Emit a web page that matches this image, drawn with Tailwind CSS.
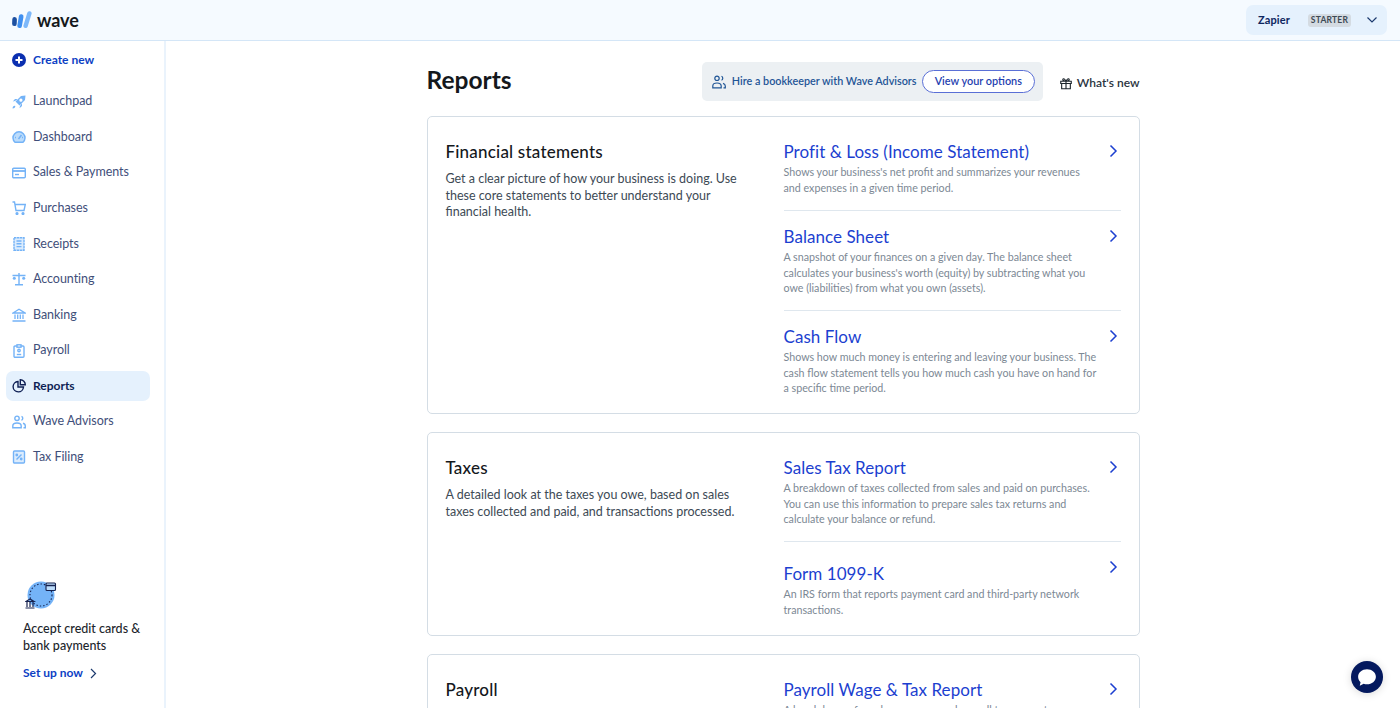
<!DOCTYPE html>
<html lang="en">

<head>
  <meta charset="UTF-8">
  <title>Reports</title>
  <script src="https://cdn.jsdelivr.net/npm/@tailwindcss/browser@4"></script>
</head>

<body class="h-screen overflow-hidden bg-white font-['Lato',sans-serif] text-[#1c252c] flex flex-col">
  <header class="h-[41px] shrink-0 bg-[#f5faff] border-b border-[#d4e6f7] flex items-center justify-between pl-[12px] pr-[13px]">
    <div class="flex items-center gap-[5px]">
      <svg width="20" height="18" viewBox="0 0 20 18" fill="none" stroke-linecap="round">
        <path d="M2.600 8.300 2.400 12.800" stroke="#1c4fa0" stroke-width="4.600" />
        <path d="M9.200 5.500 7.600 14.800" stroke="#3f8ff0" stroke-width="4.600" />
        <path d="M17.400 2.400 13.600 14.800" stroke="#7db8fa" stroke-width="4.400" />
      </svg>
      <span class="text-[18px] leading-none font-bold text-[#14181c] tracking-[-0.1px]">wave</span>
    </div>
    <div class="w-[141px] h-[30px] bg-[#e5f1fd] rounded-[7px] flex items-center pl-[12px] pr-[9px]">
      <span class="text-[11px] font-bold text-[#0e2660] tracking-[0.1px]">Zapier</span>
      <span class="ml-[18px] h-[13px] px-[3px] bg-[#d4dbe2] rounded-[3px] text-[8.500px] leading-[13px] font-bold text-[#3d4a55] tracking-[0.2px]">STARTER</span>
      <svg class="ml-auto" width="12" height="8" viewBox="0 0 12 8" fill="none" stroke="#1c3a6e" stroke-width="1.200"><path d="M1.500 1.500 6 6l4.500-4.500" /></svg>
    </div>
  </header>

  <div class="flex-1 flex min-h-0">
    <aside class="w-[166px] shrink-0 border-r-2 border-[#eaf3fc] flex flex-col pl-[6px] pr-[14px]">
      <a class="h-[30px] mt-[4px] flex items-center gap-[7px] pl-[6px] text-[12px] font-bold text-[#0d3fc4]">
        <svg width="14" height="14" viewBox="0 0 14 14"><circle cx="7" cy="7" r="7" fill="#0b2fb0" /><path d="M7 3.500v7M3.500 7h7" stroke="#fff" stroke-width="2" /></svg>
        Create new
      </a>
      <nav class="mt-[11.500px] flex flex-col gap-[5.600px] text-[12.500px] text-[#3f4f7a] tracking-[-0.05px]">
        <a class="h-[30px] flex items-center gap-[7px] pl-[6px]">
          <svg width="14" height="14" viewBox="0 0 14 14" fill="#74b3f7"><path d="M13.500.5 13 5 7.500 10.500 3.500 6.500 9 1zM8.800 3.600a1.600 1.600 0 1 0 1.700 1.700 1.600 1.600 0 0 0-1.700-1.700z" fill-rule="evenodd" /><path d="M3 6 .8 6.500 3 4h2.800zM8 11l-.5 2.200L10 11V8.200zM.6 13.400c0-1.800.7-2.600 2.300-2.600l.4.300c0 1.600-.8 2.300-2.700 2.300z" /></svg>
          Launchpad
        </a>
        <a class="h-[30px] flex items-center gap-[7px] pl-[6px]">
          <svg width="14" height="14" viewBox="0 0 14 14" fill="#bcdcfb" stroke="#74b3f7" stroke-width="1.500"><path d="M3 12.300a6 6 0 1 1 8 0z" /><path d="M6.500 9 9.500 5M3 7.500h1M10 7.500h1" fill="none" /></svg>
          Dashboard
        </a>
        <a class="h-[30px] flex items-center gap-[7px] pl-[6px]">
          <svg width="14" height="14" viewBox="0 0 14 14" fill="none" stroke="#74b3f7" stroke-width="1.400"><rect x=".7" y="2.200" width="12.600" height="9.600" rx="1" /><path d="M.7 5h12.600" stroke-width="1.800" /><path d="M3 8.500h4" /></svg>
          Sales &amp; Payments
        </a>
        <a class="h-[30px] flex items-center gap-[7px] pl-[6px]">
          <svg width="14" height="14" viewBox="0 0 14 14" fill="none" stroke="#74b3f7" stroke-width="1.400"><path d="M.5 1h2l1.500 8.500h8L13.300 3.500H3" /><circle cx="5" cy="12.500" r=".9" fill="#74b3f7" /><circle cx="11" cy="12.500" r=".9" fill="#74b3f7" /></svg>
          Purchases
        </a>
        <a class="h-[30px] flex items-center gap-[7px] pl-[6px]">
          <svg width="14" height="14" viewBox="0 0 14 14" fill="#dcecfd" stroke="#74b3f7" stroke-width="1.400"><path d="M2 .8h10v12.400H2z" stroke-dasharray="2.500 .5" /><path d="M4.500 4h5M4.500 6.800h5M4.500 9.600h5" fill="none" /></svg>
          Receipts
        </a>
        <a class="h-[30px] flex items-center gap-[7px] pl-[6px]">
          <svg width="14" height="14" viewBox="0 0 14 14" fill="none" stroke="#74b3f7" stroke-width="1.400"><path d="M7 1v11.500M3 12.800h8M.5 3.500h13" /><circle cx="2.300" cy="6.300" r="1.500" fill="#74b3f7" stroke="none" /><circle cx="11.700" cy="6.300" r="1.500" fill="#74b3f7" stroke="none" /></svg>
          Accounting
        </a>
        <a class="h-[30px] flex items-center gap-[7px] pl-[6px]">
          <svg width="14" height="14" viewBox="0 0 14 14" fill="none" stroke="#74b3f7" stroke-width="1.300"><path d="M1 5 7 1.200 13 5zM3 6.500v4.500M5.700 6.500v4.500M8.300 6.500v4.500M11 6.500v4.500M.5 13h13" /></svg>
          Banking
        </a>
        <a class="h-[30px] flex items-center gap-[7px] pl-[6px]">
          <svg width="14" height="14" viewBox="0 0 14 14" fill="none" stroke="#74b3f7" stroke-width="1.400"><rect x="2" y="2" width="10" height="11.300" rx="1" /><rect x="5" y=".8" width="4" height="2.400" fill="#fff" /><circle cx="7" cy="6.500" r="1.200" /><path d="M4.800 10.500h4.400" /></svg>
          Payroll
        </a>
        <a class="h-[30px] flex items-center gap-[7px] pl-[6px] bg-[#e5f1fd] rounded-[7px] text-[12px] font-bold text-[#0e1f54] tracking-[0px]">
          <svg width="14" height="14" viewBox="0 0 14 14" fill="none" stroke="#0e1f54" stroke-width="1.400"><path d="M6 2.500a5.200 5.200 0 1 0 5.500 5.500H6z" /><path d="M8.300.8a5 5 0 0 1 5 5H8.300z" /></svg>
          Reports
        </a>
        <a class="h-[30px] flex items-center gap-[7px] pl-[6px]">
          <svg width="14" height="14" viewBox="0 0 14 14" fill="none" stroke="#74b3f7" stroke-width="1.400"><circle cx="5" cy="3.300" r="2.200" /><path d="M.8 12.800V11c0-2 1.500-3 4.200-3s4.200 1 4.200 3v1.800zM9.500 1.300a2.200 2.200 0 0 1 0 4M11 8.300c1.500.4 2.300 1.300 2.300 2.700v1.800h-1.800" /></svg>
          Wave Advisors
        </a>
        <a class="h-[30px] flex items-center gap-[7px] pl-[6px]">
          <svg width="14" height="14" viewBox="0 0 14 14" fill="#dcecfd" stroke="#74b3f7" stroke-width="1.400"><rect x="1.500" y="1" width="11" height="12" rx="1" /><path d="M9.500 4.500l-5 5" /><circle cx="4.800" cy="5" r=".7" fill="#74b3f7" /><circle cx="9.200" cy="9" r=".7" fill="#74b3f7" /></svg>
          Tax Filing
        </a>
      </nav>
      <div class="mt-auto pl-[17px] pb-[27px]">
        <svg width="34" height="30" viewBox="0 0 34 30" class="ml-[2px]">
          <circle cx="16" cy="15" r="13.500" fill="#74b3f7" />
          <circle cx="16" cy="15" r="11" fill="none" stroke="#16224f" stroke-width="1.100" stroke-dasharray="1.400 2" />
          <rect x="21" y="3" width="9.500" height="7.500" rx="1" fill="#bcdcfb" stroke="#16224f" stroke-width="1.100" />
          <path d="M21 5.500h9.500" stroke="#16224f" stroke-width="1.500" />
          <path d="M1 21.500 5 19l4 2.500zM2 22v5M5 22v5M8 22v5M.500 28h9" fill="none" stroke="#16224f" stroke-width="1.200" />
        </svg>
        <p class="mt-[11px] text-[12.500px] leading-[16.500px] font-medium text-[#1c252c]">Accept credit cards &amp; bank payments</p>
        <a class="mt-[11px] flex items-center gap-[7px] text-[12px] leading-[16px] font-bold text-[#0d3fc4]">
          Set up now
          <svg width="7" height="11" viewBox="0 0 7 11" fill="none" stroke="#1c3a6e" stroke-width="1.200"><path d="m1 1 4.500 4.500L1 10" /></svg>
        </a>
      </div>
    </aside>

    <main class="flex-1 min-w-0 relative overflow-hidden">
      <div class="w-[713px] mx-auto">
        <div class="h-[75px] flex items-start">
          <h1 class="mt-[23px] text-[24.500px] leading-[32px] font-bold text-[#14181c]">Reports</h1>
          <div class="ml-auto mt-[21px] w-[341px] h-[39px] bg-[#ecf0f3] rounded-[5px] flex items-center pl-[10px] pr-[8px]">
            <svg width="14" height="14" viewBox="0 0 14 14" fill="none" stroke="#1f5596" stroke-width="1.200"><circle cx="5" cy="3.300" r="2.200" /><path d="M.8 12.800V11c0-2 1.500-3 4.200-3s4.200 1 4.200 3v1.800zM9.500 1.300a2.200 2.200 0 0 1 0 4M11 8.300c1.500.4 2.300 1.300 2.300 2.700v1.800h-1.800" /></svg>
            <span class="ml-[6px] text-[10.800px] font-semibold text-[#1f5596] whitespace-nowrap">Hire a bookkeeper with Wave Advisors</span>
            <span class="ml-auto w-[113px] h-[23px] bg-white border border-[#5a6fd6] rounded-full flex items-center justify-center text-[10.900px] font-semibold text-[#1f3fb0]">View your options</span>
          </div>
          <div class="ml-[17px] mt-[34px] flex items-center gap-[5px] text-[12px] leading-[16px] font-semibold text-[#2a3440] whitespace-nowrap">
            <svg width="12" height="13" viewBox="0 0 13 13" fill="none" stroke="#1c252c" stroke-width="1.200"><path d="M.8 4h11.400v2.500H.8zM1.800 6.500h9.400v5.700H1.800zM6.500 4v8.200M6.500 4C5 1 3 .8 3 2.300 3 3.500 4.500 4 6.500 4zM6.500 4C8 1 10 .8 10 2.300 10 3.500 8.500 4 6.500 4z" /></svg>
            What's new
          </div>
        </div>

        <section class="h-[298px] border border-[#d4dde5] rounded-[5px] flex pl-[18px] pr-[18px]">
          <div class="w-[338px] shrink-0">
            <h2 class="mt-[25px] text-[17px] leading-[20px] font-medium text-[#14181c] tracking-[0.2px]">Financial statements</h2>
            <p class="mt-[9px] w-[300px] text-[12.500px] leading-[16.500px] text-[#3d4a55]">Get a clear picture of how your business is doing. Use these core statements to better understand your financial health.</p>
          </div>
          <div class="flex-1 min-w-0">
            <a class="h-[94px] border-b border-[#dfe7ee] flex justify-between pt-[24px]">
              <div>
                <h3 class="text-[17px] leading-[22px] text-[#1c3fd0] tracking-[0.05px]">Profit &amp; Loss (Income Statement)</h3>
                <p class="mt-[1px] w-[310px] text-[10.700px] leading-[15.500px] text-[#7c8894]">Shows your business's net profit and summarizes your revenues and expenses in a given time period.</p>
              </div>
              <svg class="mt-[3px] mr-[3px] shrink-0" width="9" height="14" viewBox="0 0 9 14" fill="none" stroke="#1c3fd0" stroke-width="1.500"><path d="m1.500 1.500 5.500 5.500-5.500 5.500" /></svg>
            </a>
            <a class="h-[100px] border-b border-[#dfe7ee] flex justify-between pt-[15px]">
              <div>
                <h3 class="text-[17px] leading-[22px] text-[#1c3fd0] tracking-[0.05px]">Balance Sheet</h3>
                <p class="mt-[1px] w-[315px] text-[10.700px] leading-[15.500px] text-[#7c8894]">A snapshot of your finances on a given day. The balance sheet calculates your business's worth (equity) by subtracting what you owe (liabilities) from what you own (assets).</p>
              </div>
              <svg class="mt-[3px] mr-[3px] shrink-0" width="9" height="14" viewBox="0 0 9 14" fill="none" stroke="#1c3fd0" stroke-width="1.500"><path d="m1.500 1.500 5.500 5.500-5.500 5.500" /></svg>
            </a>
            <a class="flex justify-between pt-[15px]">
              <div>
                <h3 class="text-[17px] leading-[22px] text-[#1c3fd0] tracking-[0.05px]">Cash Flow</h3>
                <p class="mt-[1px] w-[318px] text-[10.700px] leading-[15.500px] text-[#7c8894]">Shows how much money is entering and leaving your business. The cash flow statement tells you how much cash you have on hand for a specific time period.</p>
              </div>
              <svg class="mt-[3px] mr-[3px] shrink-0" width="9" height="14" viewBox="0 0 9 14" fill="none" stroke="#1c3fd0" stroke-width="1.500"><path d="m1.500 1.500 5.500 5.500-5.500 5.500" /></svg>
            </a>
          </div>
        </section>

        <section class="mt-[18px] h-[204px] border border-[#d4dde5] rounded-[5px] flex pl-[18px] pr-[18px]">
          <div class="w-[338px] shrink-0">
            <h2 class="mt-[25px] text-[17px] leading-[20px] font-medium text-[#14181c] tracking-[0.2px]">Taxes</h2>
            <p class="mt-[9px] w-[300px] text-[12.500px] leading-[16.500px] text-[#3d4a55]">A detailed look at the taxes you owe, based on sales taxes collected and paid, and transactions processed.</p>
          </div>
          <div class="flex-1 min-w-0">
            <a class="h-[109px] border-b border-[#dfe7ee] flex justify-between pt-[24px]">
              <div>
                <h3 class="text-[17px] leading-[22px] text-[#1c3fd0] tracking-[0.05px]">Sales Tax Report</h3>
                <p class="mt-[1px] w-[315px] text-[10.700px] leading-[15.500px] text-[#7c8894]">A breakdown of taxes collected from sales and paid on purchases. You can use this information to prepare sales tax returns and calculate your balance or refund.</p>
              </div>
              <svg class="mt-[3px] mr-[3px] shrink-0" width="9" height="14" viewBox="0 0 9 14" fill="none" stroke="#1c3fd0" stroke-width="1.500"><path d="m1.500 1.500 5.500 5.500-5.500 5.500" /></svg>
            </a>
            <a class="flex justify-between pt-[21px]">
              <div>
                <h3 class="text-[17px] leading-[22px] text-[#1c3fd0] tracking-[0.05px]">Form 1099-K</h3>
                <p class="mt-[1px] w-[315px] text-[10.700px] leading-[15.500px] text-[#7c8894]">An IRS form that reports payment card and third-party network transactions.</p>
              </div>
              <svg class="-mt-[3px] mr-[3px] shrink-0" width="9" height="14" viewBox="0 0 9 14" fill="none" stroke="#1c3fd0" stroke-width="1.500"><path d="m1.500 1.500 5.500 5.500-5.500 5.500" /></svg>
            </a>
          </div>
        </section>

        <section class="mt-[18px] h-[204px] border border-[#d4dde5] rounded-[5px] flex pl-[18px] pr-[18px]">
          <div class="w-[338px] shrink-0">
            <h2 class="mt-[25px] text-[17px] leading-[20px] font-medium text-[#14181c] tracking-[0.2px]">Payroll</h2>
          </div>
          <div class="flex-1 min-w-0">
            <a class="flex justify-between pt-[24px]">
              <div>
                <h3 class="text-[17px] leading-[22px] text-[#1c3fd0] tracking-[0.05px]">Payroll Wage &amp; Tax Report</h3>
                <p class="mt-[1px] w-[315px] text-[10.700px] leading-[15.500px] text-[#7c8894]">A breakdown of employee wages and payroll tax amounts</p>
              </div>
              <svg class="mt-[3px] mr-[3px] shrink-0" width="9" height="14" viewBox="0 0 9 14" fill="none" stroke="#1c3fd0" stroke-width="1.500"><path d="m1.500 1.500 5.500 5.500-5.500 5.500" /></svg>
            </a>
          </div>
        </section>
      </div>

      <div class="absolute right-[17px] bottom-[15px] w-[32px] h-[32px] rounded-full bg-[#04195e] shadow-[0_1px_8px_rgba(0,0,0,0.15)] flex items-center justify-center">
        <svg width="20" height="19" viewBox="0 0 18 17"><path d="M9 1c4.400 0 8 2.900 8 6.800s-3.600 6.800-8 6.800c-1 0-2-.2-3-.5L2.500 16l.7-3.300C1.800 11.500 1 9.800 1 7.800 1 3.900 4.600 1 9 1z" fill="#fff" /></svg>
      </div>
    </main>
  </div>
</body>

</html>
